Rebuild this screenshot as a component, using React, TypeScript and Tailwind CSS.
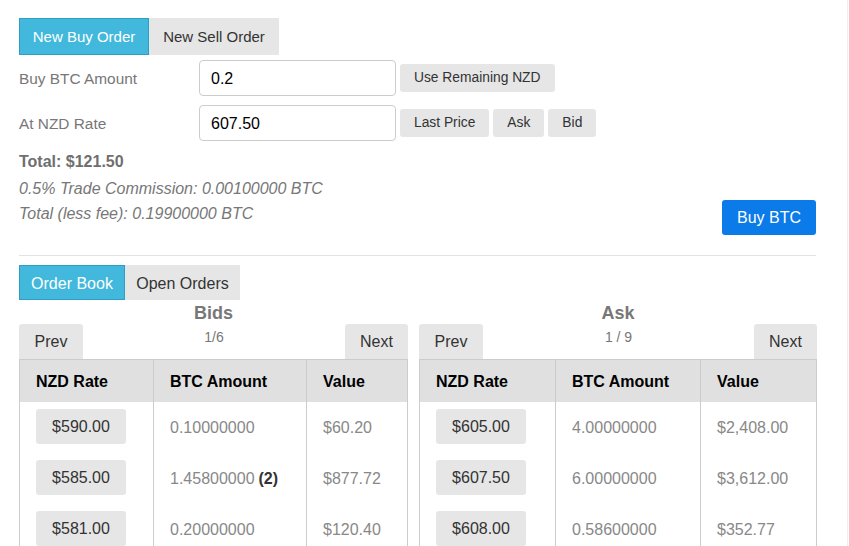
import React from 'react';

type Row = { rate: string; amount: string; count?: number; value: string };

const bids: Row[] = [
  { rate: '$590.00', amount: '0.10000000', value: '$60.20' },
  { rate: '$585.00', amount: '1.45800000', count: 2, value: '$877.72' },
  { rate: '$581.00', amount: '0.20000000', value: '$120.40' },
];

const asks: Row[] = [
  { rate: '$605.00', amount: '4.00000000', value: '$2,408.00' },
  { rate: '$607.50', amount: '6.00000000', value: '$3,612.00' },
  { rate: '$608.00', amount: '0.58600000', value: '$352.77' },
];

function GreyButton({ children, className = '' }: { children: React.ReactNode; className?: string }) {
  return (
    <button className={`h-[28px] rounded-[3px] bg-[#e6e6e6] px-[14px] pt-[1px] text-[13.8px] text-[#333] ${className}`}>
      {children}
    </button>
  );
}

function BookSide({
  title,
  pages,
  rows,
  cols,
  width,
}: {
  title: string;
  pages: string;
  rows: Row[];
  cols: string;
  width: string;
}) {
  return (
    <div className={`flex flex-col ${width}`}>
      <div className="mt-[2px] text-center text-[18px] font-bold leading-[22px] text-[#777]">{title}</div>
      <div className="flex h-[35px] items-start justify-between">
        <button className="h-[35px] w-[64px] rounded-t-[3px] bg-[#e6e6e6] pt-[1px] text-[16px] text-[#333]">Prev</button>
        <span className="mt-[3px] text-[14px] text-[#777]">{pages}</span>
        <button className="h-[35px] w-[63px] rounded-t-[3px] bg-[#e6e6e6] pt-[1px] text-[16px] text-[#333]">Next</button>
      </div>
      <div className={`grid ${cols} border-t border-r border-[#ccc]`}>
        {['NZD Rate', 'BTC Amount', 'Value'].map((h) => (
          <div
            key={h}
            className="flex h-[42px] items-center border-l border-[#ccc] bg-[#e0e0e0] pl-[16px] pt-[1px] text-[16px] font-bold text-black"
          >
            {h}
          </div>
        ))}
        {rows.map((r) => (
          <React.Fragment key={r.rate}>
            <div className="h-[51px] border-l border-[#ccc] pl-[16px] pt-[7px]">
              <button className="h-[35px] w-[90px] rounded-[3px] bg-[#e6e6e6] pt-[1px] text-[16px] text-[#333]">
                {r.rate}
              </button>
            </div>
            <div className="flex h-[51px] items-center border-l border-[#ccc] pl-[16px] text-[16px] text-[#888]">
              {r.amount}
              {r.count ? <b className="ml-[4px] text-[#333]">({r.count})</b> : null}
            </div>
            <div className="flex h-[51px] items-center border-l border-[#ccc] pl-[16px] text-[16px] text-[#888]">
              {r.value}
            </div>
          </React.Fragment>
        ))}
      </div>
    </div>
  );
}

export default function App() {
  return (
    <div
      className="h-[546px] w-[849px] overflow-hidden bg-white"
      style={{ fontFamily: '"Liberation Sans", Arial, sans-serif' }}
    >
      <div className="h-full w-[848px] border-r border-[#eee] pl-[19px] pt-[18px]">
        <div className="w-[797px]">
          <div className="flex h-[37px]">
            <button className="w-[130px] border border-[#2e9fc4] bg-[#41b8dc] pt-[2px] text-[15px] text-white">
              New Buy Order
            </button>
            <button className="w-[130px] bg-[#e6e6e6] pt-[2px] text-[15px] text-[#333]">New Sell Order</button>
          </div>

          <div className="mt-[5px] flex h-[36px] items-center">
            <label className="w-[180px] pt-[1px] text-[15.4px] text-[#777]">Buy BTC Amount</label>
            <input
              defaultValue="0.2"
              className="h-[36px] w-[197px] rounded-[4px] border border-[#ccc] px-[11px] pt-[1px] text-[16px] text-black outline-none"
            />
            <GreyButton className="ml-[4px]">Use Remaining NZD</GreyButton>
          </div>

          <div className="mt-[9px] flex h-[36px] items-center">
            <label className="w-[180px] pt-[1px] text-[15.4px] text-[#777]">At NZD Rate</label>
            <input
              defaultValue="607.50"
              className="h-[36px] w-[197px] rounded-[4px] border border-[#ccc] px-[11px] pt-[1px] text-[16px] text-black outline-none"
            />
            <div className="ml-[4px] flex gap-[4px]">
              <GreyButton>Last Price</GreyButton>
              <GreyButton>Ask</GreyButton>
              <GreyButton className="px-[13px]">Bid</GreyButton>
            </div>
          </div>

          <div className="mt-[8px] flex items-start justify-between">
            <div className="text-[16px] leading-[25px] text-[#777]">
              <div className="font-bold text-[#6f6f6f]">Total: $121.50</div>
              <div className="mt-[2px] italic">0.5% Trade Commission: 0.00100000 BTC</div>
              <div className="italic">Total (less fee): 0.19900000 BTC</div>
            </div>
            <button className="mt-[51px] h-[35px] w-[94px] rounded-[3px] bg-[#0a7be8] pt-[1px] text-[16px] text-white">
              Buy BTC
            </button>
          </div>

          <div className="mt-[20px] border-t border-[#e3e3e3]" />

          <div className="mt-[9px] flex h-[35px]">
            <button className="w-[106px] border border-[#2e9fc4] bg-[#41b8dc] pt-[2px] text-[16px] text-white">
              Order Book
            </button>
            <button className="w-[115px] bg-[#e6e6e6] pt-[2px] text-[16px] text-[#333]">Open Orders</button>
          </div>

          <div className="flex gap-[11px]">
            <BookSide
              title="Bids"
              pages="1/6"
              rows={bids}
              width="w-[389px]"
              cols="grid-cols-[134px_153px_101px]"
            />
            <BookSide
              title="Ask"
              pages="1 / 9"
              rows={asks}
              width="w-[398px]"
              cols="grid-cols-[136px_145px_116px]"
            />
          </div>
        </div>
      </div>
    </div>
  );
}
